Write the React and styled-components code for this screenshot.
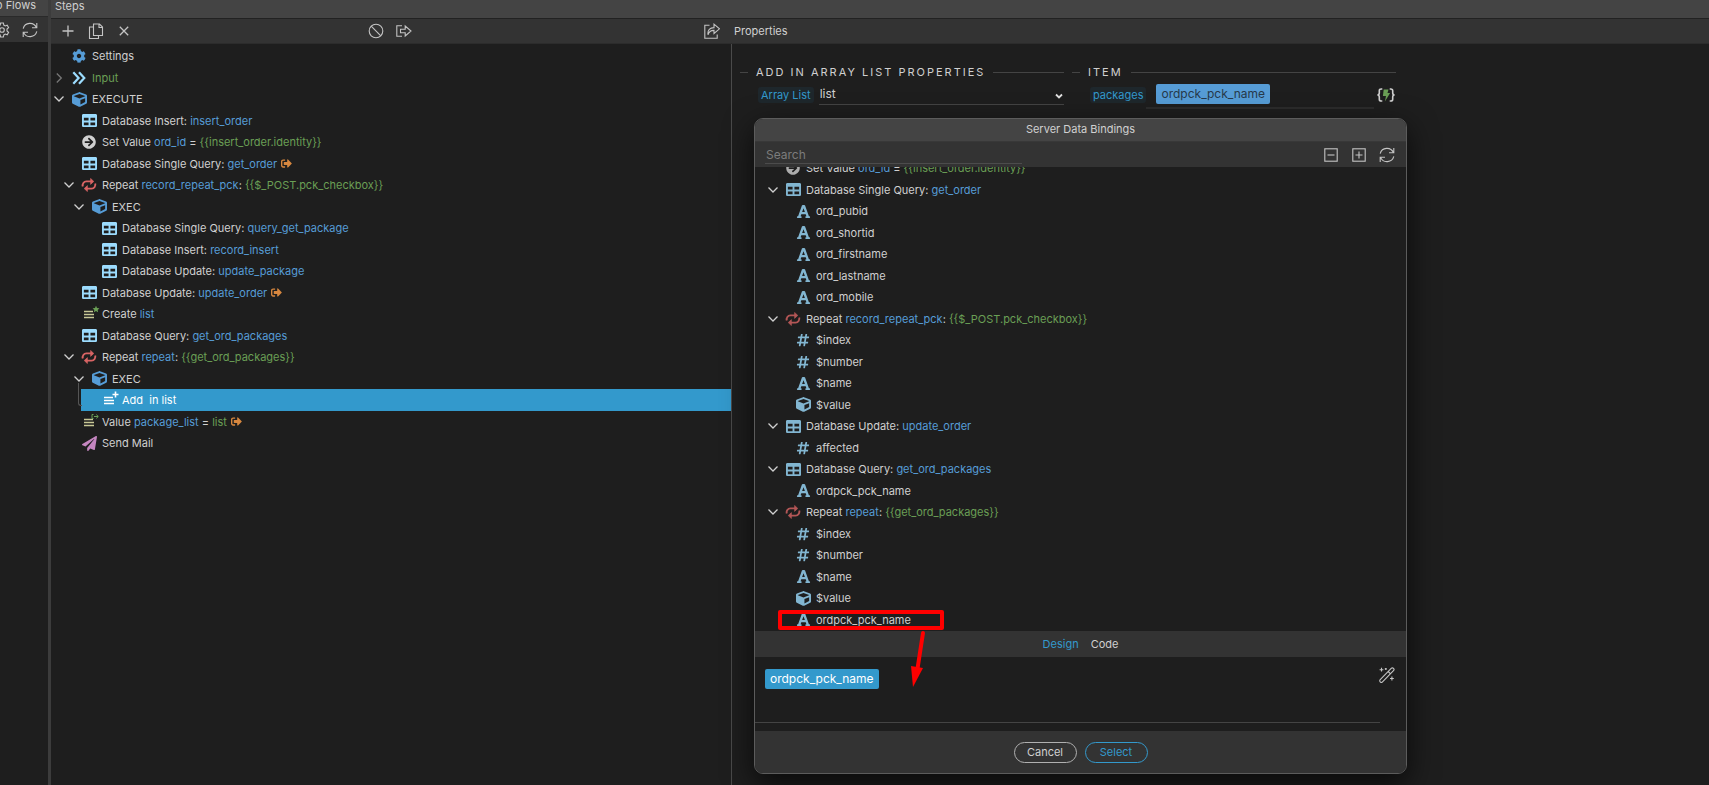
import React from 'react';
import styled, { createGlobalStyle, css } from 'styled-components';
import {
    FaArrowCircleRight,
    FaCog,
    FaCube,
    FaFont,
    FaHashtag,
    FaPaperPlane,
    FaSignOutAlt,
    FaTable
} from 'react-icons/fa';

const steps = [
    { depth: 0, icon: 'cog', parts: [['Settings']] },
    { depth: 0, icon: 'input', toggle: 'closed', parts: [['Input', 'green']] },
    { depth: 0, icon: 'cube', toggle: 'open', parts: [['EXECUTE']] },
    { depth: 1, icon: 'table', parts: [['Database Insert: '], ['insert_order', 'blue']] },
    { depth: 1, icon: 'arrow', parts: [['Set Value '], ['ord_id', 'blue'], [' = '], ['{{insert_order.identity}}', 'green']] },
    { depth: 1, icon: 'table', output: true, parts: [['Database Single Query: '], ['get_order', 'blue']] },
    { depth: 1, icon: 'repeat', toggle: 'open', parts: [['Repeat '], ['record_repeat_pck', 'blue'], [': '], ['{{$_POST.pck_checkbox}}', 'green']] },
    { depth: 2, icon: 'cube', toggle: 'open', parts: [['EXEC']] },
    { depth: 3, icon: 'table', parts: [['Database Single Query: '], ['query_get_package', 'blue']] },
    { depth: 3, icon: 'table', parts: [['Database Insert: '], ['record_insert', 'blue']] },
    { depth: 3, icon: 'table', parts: [['Database Update: '], ['update_package', 'blue']] },
    { depth: 1, icon: 'table', output: true, parts: [['Database Update: '], ['update_order', 'blue']] },
    { depth: 1, icon: 'listStar', parts: [['Create '], ['list', 'blue']] },
    { depth: 1, icon: 'table', parts: [['Database Query: '], ['get_ord_packages', 'blue']] },
    { depth: 1, icon: 'repeat', toggle: 'open', parts: [['Repeat '], ['repeat', 'blue'], [': '], ['{{get_ord_packages}}', 'green']] },
    { depth: 2, icon: 'cube', toggle: 'open', parts: [['EXEC']] },
    { depth: 3, icon: 'listPlus', selected: true, parts: [['Add  in list']] },
    { depth: 1, icon: 'listOut', output: true, parts: [['Value '], ['package_list', 'blue'], [' = '], ['list', 'green']] },
    { depth: 1, icon: 'plane', parts: [['Send Mail']] }
];

const bindings = [
    { depth: 0, icon: 'arrow', parts: [['Set Value '], ['ord_id', 'blue'], [' = '], ['{{insert_order.identity}}', 'green']] },
    { depth: 0, icon: 'table', toggle: 'open', parts: [['Database Single Query: '], ['get_order', 'blue']] },
    { depth: 1, icon: 'text', parts: [['ord_pubid']] },
    { depth: 1, icon: 'text', parts: [['ord_shortid']] },
    { depth: 1, icon: 'text', parts: [['ord_firstname']] },
    { depth: 1, icon: 'text', parts: [['ord_lastname']] },
    { depth: 1, icon: 'text', parts: [['ord_mobile']] },
    { depth: 0, icon: 'repeat', toggle: 'open', parts: [['Repeat '], ['record_repeat_pck', 'blue'], [': '], ['{{$_POST.pck_checkbox}}', 'green']] },
    { depth: 1, icon: 'hash', parts: [['$index']] },
    { depth: 1, icon: 'hash', parts: [['$number']] },
    { depth: 1, icon: 'text', parts: [['$name']] },
    { depth: 1, icon: 'cubeLight', parts: [['$value']] },
    { depth: 0, icon: 'table', toggle: 'open', parts: [['Database Update: '], ['update_order', 'blue']] },
    { depth: 1, icon: 'hash', parts: [['affected']] },
    { depth: 0, icon: 'table', toggle: 'open', parts: [['Database Query: '], ['get_ord_packages', 'blue']] },
    { depth: 1, icon: 'text', parts: [['ordpck_pck_name']] },
    { depth: 0, icon: 'repeat', toggle: 'open', parts: [['Repeat '], ['repeat', 'blue'], [': '], ['{{get_ord_packages}}', 'green']] },
    { depth: 1, icon: 'hash', parts: [['$index']] },
    { depth: 1, icon: 'hash', parts: [['$number']] },
    { depth: 1, icon: 'text', parts: [['$name']] },
    { depth: 1, icon: 'cubeLight', parts: [['$value']] },
    { depth: 1, icon: 'text', parts: [['ordpck_pck_name']] }
];

const colors = {
    text: '#d0d0d0',
    blue: '#569cd6',
    green: '#6a9f55',
    accent: '#3399cc'
};

const Line = ({ size = 16, children }) => (
    <svg width={size} height={size} viewBox="0 0 16 16" fill="none" stroke="currentColor" strokeWidth="1.1" aria-hidden="true">
        {children}
    </svg>
);

const PlusIcon = () => <Line><path d="M8 2.5v11M2.5 8h11" strokeWidth="1.3" /></Line>;
const CloseIcon = () => <Line><path d="M3.8 3.8l8.4 8.4M12.2 3.8l-8.4 8.4" strokeWidth="1.3" /></Line>;
const CopyIcon = () => (
    <Line>
        <path d="M5.5 1h6l3 3v8.5h-9zM11 1v3.5h3.5M5.5 4h-4v11.5h9V12.5" />
    </Line>
);
const BanIcon = () => <Line><circle cx="8" cy="8" r="6.8" /><path d="M3.2 3.2l9.6 9.6" /></Line>;
const ExitIcon = () => (
    <Line>
        <path d="M6 2.8H.8v10.4H6M4.5 6.2h4.7V3l5.8 5-5.8 5V9.8H4.5z" />
    </Line>
);
const ShareIcon = () => (
    <Line>
        <path d="M5.5 2.2H.8v13h12.4v-3.7M4 11.8c-.6-5 2-7.2 6-7.2V1.2l5.5 4.6L10 10.5V7.4c-3.2-.1-5 1-6 4.4z" />
    </Line>
);
const RefreshIcon = () => (
    <Line>
        <path d="M1.2 6.6a7 7 0 0 1 13.2-1M14.8 1v4.8H10M14.8 9.4a7 7 0 0 1-13.2 1M1.2 15v-4.8H6" />
    </Line>
);
const GearIcon = () => (
    <Line>
        <path d="M6.6 1h2.8l.4 2.1 1.4.8 2-.7 1.4 2.4-1.6 1.4v2l1.6 1.4-1.4 2.4-2-.7-1.4.8-.4 2.1H6.6l-.4-2.1-1.4-.8-2 .7-1.4-2.4L3 9V7L1.4 5.6l1.4-2.4 2 .7 1.4-.8z" />
        <circle cx="8" cy="8" r="2.3" />
    </Line>
);
const CollapseIcon = () => <Line><rect x="1.8" y="1.8" width="12.4" height="12.4" /><path d="M4.5 8h7" /></Line>;
const ExpandIcon = () => <Line><rect x="1.8" y="1.8" width="12.4" height="12.4" /><path d="M4.5 8h7M8 4.5v7" /></Line>;
const WandIcon = () => (
    <Line>
        <path d="M1.2 12.6L12.2 1.4a1.5 1.5 0 0 1 2.3 2.3L3.5 14.9a1.5 1.5 0 0 1-2.3-2.3zM9.2 4.5l2.3 2.3" />
        <path d="M2.5.8v3.8M.6 2.7h3.8M12.9 9.6v3.8M11 11.5h3.8M6.8.9v2M5.8 1.9h2" />
    </Line>
);
const BindingIcon = () => (
    <svg width="20" height="16" viewBox="0 0 20 16" fill="none" aria-hidden="true">
        <path d="M6.3 2H5.2C3.9 2 3.3 2.6 3.3 3.8v2.3C3.3 7.3 2.5 8 1.4 8c1.1 0 1.9.7 1.9 1.9v2.3c0 1.2.6 1.8 1.9 1.8h1.1" stroke="#d0d0d0" strokeWidth="1.6" />
        <path d="M13.7 2h1.1c1.3 0 1.9.6 1.9 1.8v2.3c0 1.2.8 1.9 1.9 1.9-1.1 0-1.9.7-1.9 1.9v2.3c0 1.2-.6 1.8-1.9 1.8h-1.1" stroke="#d0d0d0" strokeWidth="1.6" />
        <path d="M7.7 2.5h4.8l-1 3.6h2.6l-5.2 8.4 1.1-5.6H6.9z" fill="#6a9f55" />
    </svg>
);
const ChevronIcon = ({ open }) => (
    <svg width="12" height="12" viewBox="0 0 12 12" fill="none" stroke={open ? '#d0d0d0' : '#777777'} strokeWidth="1.3" aria-hidden="true">
        <path d={open ? 'M1.5 3.5L6 8l4.5-4.5' : 'M3.8 1.5L8.3 6l-4.5 4.5'} />
    </svg>
);
const InputIcon = () => (
    <svg width="14" height="14" viewBox="0 0 14 14" fill="none" stroke="#9cdcfe" strokeWidth="2.2" aria-hidden="true">
        <path d="M1.3 1.2L6.6 7l-5.3 5.8M7 1.2L12.3 7 7 12.8" />
    </svg>
);
const RepeatIcon = () => (
    <svg width="16" height="14" viewBox="0 0 16 14" fill="none" stroke="#d96464" strokeWidth="1.9" aria-hidden="true">
        <path d="M1.8 8.4A3.9 3.9 0 0 1 5.4 3.4h6M14.2 5.6a3.900 3.900 0 0 1-3.600 5h-6" />
        <path d="M9.600.400l3.200 3-3.200 3zM6.400 7.600l-3.200 3 3.200 3z" fill="#d96464" strokeWidth=".6" />
    </svg>
);

const Bars = ({ color, children }) => (
    <svg width="16" height="16" viewBox="0 0 16 16" fill="none" aria-hidden="true" overflow="visible">
        <path d="M3 5.5h9M3 8.500h10M3 11.500h10" stroke={color} strokeWidth="1.6" />
        {children}
    </svg>
);

const icons = {
    cog: <FaCog size={14} color="#569cd6" />,
    input: <InputIcon />,
    cube: <FaCube size={15} color="#569cd6" />,
    cubeLight: <FaCube size={15} color="#9cdcfe" />,
    table: <FaTable size={15} color="#9cdcfe" />,
    arrow: <FaArrowCircleRight size={14} color="#d0d0d0" />,
    repeat: <RepeatIcon />,
    plane: <FaPaperPlane size={15} color="#c586c0" />,
    text: <FaFont size={15} color="#9cdcfe" />,
    hash: <FaHashtag size={14} color="#9cdcfe" />,
    listStar: (
        <Bars color="#c8c896">
            <path d="M15-.2l1 2.100 2.400.300-1.700 1.700.400 2.300-2.100-1.100-2.100 1.100.400-2.300-1.700-1.700 2.400-.300z" fill="#6a9f55" />
        </Bars>
    ),
    listPlus: (
        <Bars color="#ffffff">
            <path d="M14.500-.500v6M11.500 2.500h6" stroke="#ffffff" strokeWidth="1.6" />
        </Bars>
    ),
    listOut: (
        <Bars color="#c8c896">
            <path d="M12.500.500h-1.500v4h1.500M13 2.500h4M15.300.600l2 1.900-2 1.900" stroke="#6a9f55" strokeWidth="1" />
        </Bars>
    )
};

const Tree = ({ label, items, inset }) => (
    <TreeList aria-label={label} $inset={inset}>
        {items.map((item, i) => (
            <TreeRow key={i} $depth={item.depth} $selected={item.selected}>
                {item.toggle ? (
                    <Toggle type="button" aria-label="Toggle" aria-expanded={item.toggle === 'open'}>
                        <ChevronIcon open={item.toggle === 'open'} />
                    </Toggle>
                ) : (
                    <ToggleSpace />
                )}
                <RowIcon $dim={inset}>{icons[item.icon]}</RowIcon>
                <RowText>
                    {item.parts.map(([text, tone], n) => (
                        <Tone key={n} $tone={tone}>{text}</Tone>
                    ))}
                </RowText>
                {item.output && <Output><FaSignOutAlt size={11} /></Output>}
            </TreeRow>
        ))}
    </TreeList>
);

const BindingsDialog = () => (
    <Dialog role="dialog" aria-labelledby="bindings-title">
        <DialogTitle id="bindings-title">Server Data Bindings</DialogTitle>
        <DialogTools>
            <SearchInput type="text" placeholder="Search" aria-label="Search" />
            <ToolGroup>
                <ToolButton type="button" aria-label="Collapse all"><CollapseIcon /></ToolButton>
                <ToolButton type="button" aria-label="Expand all"><ExpandIcon /></ToolButton>
                <ToolButton type="button" aria-label="Refresh"><RefreshIcon /></ToolButton>
            </ToolGroup>
        </DialogTools>
        <BindingList>
            <Tree label="Bindings" items={bindings} inset />
            <Highlight />
        </BindingList>
        <ModeBar>
            <ModeButton type="button" $active>Design</ModeButton>
            <ModeButton type="button">Code</ModeButton>
        </ModeBar>
        <Editor>
            <EditorField>
                <Token $picked>ordpck_pck_name</Token>
            </EditorField>
            <ToolButton type="button" aria-label="Formatter"><WandIcon /></ToolButton>
        </Editor>
        <DialogFooter>
            <PillButton type="button">Cancel</PillButton>
            <PillButton type="button" $primary>Select</PillButton>
        </DialogFooter>
        <Pointer width="24" height="60" viewBox="0 0 24 60" aria-hidden="true">
            <path d="M15 3L9 42" stroke="#ff0000" strokeWidth="4" strokeLinecap="round" />
            <path d="M3 36l12 2-10 19z" fill="#ff0000" />
        </Pointer>
    </Dialog>
);

export default function App() {
    return (
        <>
            <GlobalStyle />
            <Workspace>
                <Flows>
                    <FlowsTitle>p Flows</FlowsTitle>
                    <FlowsTools>
                        <ToolButton type="button" aria-label="Options"><GearIcon /></ToolButton>
                        <ToolButton type="button" aria-label="Refresh"><RefreshIcon /></ToolButton>
                    </FlowsTools>
                </Flows>
                <Main>
                    <StepsTitle>Steps</StepsTitle>
                    <Columns>
                        <StepsPanel>
                            <StepsTools>
                                <ToolGroup>
                                    <ToolButton type="button" aria-label="Add"><PlusIcon /></ToolButton>
                                    <ToolButton type="button" aria-label="Duplicate"><CopyIcon /></ToolButton>
                                    <ToolButton type="button" aria-label="Remove"><CloseIcon /></ToolButton>
                                </ToolGroup>
                                <ToolGroup>
                                    <ToolButton type="button" aria-label="Disable"><BanIcon /></ToolButton>
                                    <ToolButton type="button" aria-label="Output"><ExitIcon /></ToolButton>
                                </ToolGroup>
                                <ToolGroup $end>
                                    <ToolButton type="button" aria-label="Open"><ShareIcon /></ToolButton>
                                </ToolGroup>
                            </StepsTools>
                            <StepsBody>
                                <Tree label="Steps" items={steps} />
                            </StepsBody>
                        </StepsPanel>
                        <Properties>
                            <PropertiesTitle>Properties</PropertiesTitle>
                            <PropertiesBody>
                                <Groups>
                                    <Group>
                                        <Legend>ADD IN ARRAY LIST PROPERTIES</Legend>
                                        <Field>
                                            <FieldLabel htmlFor="array-list">Array List</FieldLabel>
                                            <SelectWrap>
                                                <Select id="array-list" defaultValue="list">
                                                    <option value="list">list</option>
                                                </Select>
                                                <svg width="10" height="10" viewBox="0 0 10 10" fill="none" stroke="#e0e0e0" strokeWidth="1.8" aria-hidden="true">
                                                    <path d="M2 3.5l3 3 3-3" />
                                                </svg>
                                            </SelectWrap>
                                        </Field>
                                    </Group>
                                    <Group>
                                        <Legend>ITEM</Legend>
                                        <Field>
                                            <FieldLabel as="span">packages</FieldLabel>
                                            <TokenField><Token>ordpck_pck_name</Token></TokenField>
                                            <BindButton type="button" aria-label="Bind data"><BindingIcon /></BindButton>
                                        </Field>
                                    </Group>
                                </Groups>
                                <BindingsDialog />
                            </PropertiesBody>
                        </Properties>
                    </Columns>
                </Main>
            </Workspace>
        </>
    );
}

const GlobalStyle = createGlobalStyle`
    * {
        box-sizing: border-box;
    }

    body {
        margin: 0;
        overflow: hidden;
        background: #1e1e1e;
        color: ${colors.text};
        font-family: Inter, "Liberation Sans", sans-serif;
        font-size: 11px;
        line-height: 16px;
    }

    button, input, select {
        margin: 0;
        padding: 0;
        border: 0;
        background: none;
        color: inherit;
        font: inherit;
    }
`;

const Workspace = styled.div`
    display: flex;
    min-height: 100vh;
`;

const Flows = styled.aside`
    flex: 0 0 51px;
    border-right: 3px solid #3c3c3c;
    overflow: hidden;
`;

const titleBar = css`
    display: flex;
    align-items: center;
    margin: 0;
    background: #444444;
    font-size: 11px;
    font-weight: 400;
    white-space: nowrap;
`;

const FlowsTitle = styled.h2`
    ${titleBar}
    justify-content: flex-end;
    height: 17px;
    padding: 0 12px 7px 0;
    border-bottom: 1px solid #2a2a2a;
`;

const FlowsTools = styled.div`
    display: flex;
    align-items: center;
    justify-content: flex-end;
    height: 25px;
    padding-right: 4px;
    background: #333333;
`;

const Main = styled.main`
    display: flex;
    flex: 1;
    flex-direction: column;
    min-width: 0;
`;

const StepsTitle = styled.h2`
    ${titleBar}
    height: 19px;
    padding: 0 4px 6px;
    border-bottom: 1px solid #222222;
`;

const Columns = styled.div`
    display: flex;
    flex: 1;
`;

const StepsPanel = styled.section`
    display: flex;
    flex: 0 0 681px;
    flex-direction: column;
`;

const StepsTools = styled.div`
    display: grid;
    grid-template-columns: 1fr auto 1fr;
    align-items: center;
    height: 25px;
    padding: 0 6px 0 3px;
    background: #333333;
    border-bottom: 1px solid #2c2c2c;
`;

const ToolGroup = styled.div`
    display: flex;
    justify-content: ${props => (props.$end ? 'flex-end' : 'flex-start')};
`;

const ToolButton = styled.button`
    display: flex;
    flex: 0 0 28px;
    align-items: center;
    justify-content: center;
    height: 24px;
    color: #c4c4c4;
`;

const StepsBody = styled.div`
    flex: 1;
    padding-top: 1px;
    border-right: 1px solid #4a4a4a;
`;

/* rows alternate so that the average pitch sits between the two heights */
const TreeList = styled.ul`
    display: grid;
    grid-auto-rows: 22px 21px;
    margin: ${props => (props.$inset ? '-10px 0 0' : '0')};
    padding: ${props => (props.$inset ? '0 0 0 10px' : '0')};
    list-style: none;
`;

const TreeRow = styled.li`
    position: relative;
    display: flex;
    align-items: center;
    margin-left: ${props => props.$depth * 10}px;

    ${props => props.$selected && css`
        background: ${colors.accent};
        color: #ffffff;

        &::before {
            content: "";
            position: absolute;
            top: -6px;
            left: -3px;
            width: 3px;
            height: 22px;
            border-left: 1px solid #555555;
            border-bottom: 1px solid #555555;
            border-bottom-left-radius: 3px;
        }
    `}
`;

const Toggle = styled.button`
    display: flex;
    flex: 0 0 16px;
    align-items: center;
    justify-content: center;
    height: 16px;
`;

const ToggleSpace = styled.span`
    flex: 0 0 16px;
`;

const RowIcon = styled.span`
    display: flex;
    flex: 0 0 16px;
    align-items: center;
    justify-content: center;
    margin: 0 5px 0 4px;
    opacity: ${props => (props.$dim ? 0.8 : 1)};
`;

const RowText = styled.span`
    white-space: pre;
`;

const Tone = styled.span`
    color: ${props => colors[props.$tone] || 'inherit'};
`;

const Output = styled.span`
    display: flex;
    margin-left: 4px;
    color: #d7873f;
`;

const Properties = styled.section`
    display: flex;
    flex: 1;
    flex-direction: column;
    min-width: 0;
`;

const PropertiesTitle = styled.h2`
    ${titleBar}
    height: 25px;
    padding: 0 2px;
    background: #333333;
    border-bottom: 1px solid #2c2c2c;
`;

const PropertiesBody = styled.div`
    position: relative;
    flex: 1;
    padding: 18px 8px;
`;

const Groups = styled.div`
    display: grid;
    grid-template-columns: 1fr 1fr;
    gap: 8px;
    max-width: 656px;
`;

const Group = styled.div`
    display: flex;
    flex-direction: column;
    min-width: 0;
`;

const Legend = styled.h3`
    display: flex;
    align-items: center;
    gap: 8px;
    margin: 0;
    font-size: 11px;
    font-weight: 400;
    letter-spacing: 2px;
    line-height: 20px;
    white-space: nowrap;

    &::before,
    &::after {
        content: "";
        height: 1px;
        background: #444444;
    }

    &::before {
        flex: 0 0 8px;
    }

    &::after {
        flex: 1;
    }
`;

const Field = styled.div`
    display: flex;
    align-items: center;
    height: 26px;
    padding-left: 18px;
`;

const FieldLabel = styled.label`
    padding: 0 3px;
    border-radius: 3px;
    background: #1e272c;
    color: ${colors.accent};
    white-space: nowrap;
`;

const SelectWrap = styled.span`
    position: relative;
    flex: 1;
    margin-left: 5px;

    svg {
        position: absolute;
        top: 6px;
        right: 0;
        pointer-events: none;
    }
`;

const Select = styled.select`
    display: block;
    width: 100%;
    height: 20px;
    padding: 0 1px 2px;
    border-bottom: 1px solid #444444;
    border-radius: 0;
    appearance: none;
    font-size: 12px;
`;

const TokenField = styled.div`
    flex: 1;
    padding: 3px 0 3px 10px;
    border-bottom: 2px solid #2c2c2c;
`;

const Token = styled.span`
    display: inline-block;
    padding: 0 5px;
    border-radius: 2px;
    background: ${props => (props.$picked ? colors.accent : colors.blue)};
    color: ${props => (props.$picked ? '#ffffff' : '#26394a')};
    font-size: 12px;
    line-height: 20px;
    white-space: nowrap;
`;

const BindButton = styled.button`
    display: flex;
    margin-left: 2px;
`;

const Dialog = styled.div`
    position: absolute;
    top: 74px;
    left: 22px;
    width: 653px;
    border: 1px solid #5c5c5c;
    border-radius: 9px;
    background: #1e1e1e;
    box-shadow: 0 10px 30px rgba(0, 0, 0, 0.7);
`;

const DialogTitle = styled.h2`
    ${titleBar}
    justify-content: center;
    height: 23px;
    padding-bottom: 2px;
    border-bottom: 1px solid #383838;
    border-radius: 8px 8px 0 0;
`;

const DialogTools = styled.div`
    display: flex;
    align-items: center;
    justify-content: space-between;
    height: 25px;
    padding: 0 5px 0 10px;
    background: #333333;
`;

const SearchInput = styled.input`
    width: 257px;
    height: 19px;
    padding-left: 1px;
    border-bottom: 1px solid #4c4c4c;
    outline: 0;
    font-size: 12px;

    &::placeholder {
        color: #7c7c7c;
    }
`;

const BindingList = styled.div`
    position: relative;
    height: 464px;
    overflow: hidden;
`;

const Highlight = styled.div`
    position: absolute;
    bottom: 1px;
    left: 23px;
    width: 166px;
    height: 20px;
    border: 4px solid #ff0000;
    border-radius: 2px;
`;

const ModeBar = styled.div`
    display: flex;
    align-items: center;
    justify-content: center;
    gap: 12px;
    height: 26px;
    background: #333333;
`;

const ModeButton = styled.button`
    color: ${props => (props.$active ? colors.accent : colors.text)};
`;

const Editor = styled.div`
    display: flex;
    align-items: flex-start;
    padding: 6px 5px 8px 0;
`;

const EditorField = styled.div`
    flex: 1;
    height: 60px;
    margin-right: -7px;
    padding: 6px 0 0 10px;
    border-bottom: 1px solid #444444;
`;

const DialogFooter = styled.div`
    display: flex;
    align-items: center;
    justify-content: center;
    gap: 8px;
    height: 42px;
    background: #333333;
    border-radius: 0 0 8px 8px;
`;

const PillButton = styled.button`
    width: 63px;
    height: 21px;
    border: 1px solid ${props => (props.$primary ? colors.accent : '#b0b0b0')};
    border-radius: 11px;
    color: ${props => (props.$primary ? colors.accent : colors.text)};
`;

const Pointer = styled.svg`
    position: absolute;
    left: 153px;
    bottom: 83px;
    pointer-events: none;
`;
